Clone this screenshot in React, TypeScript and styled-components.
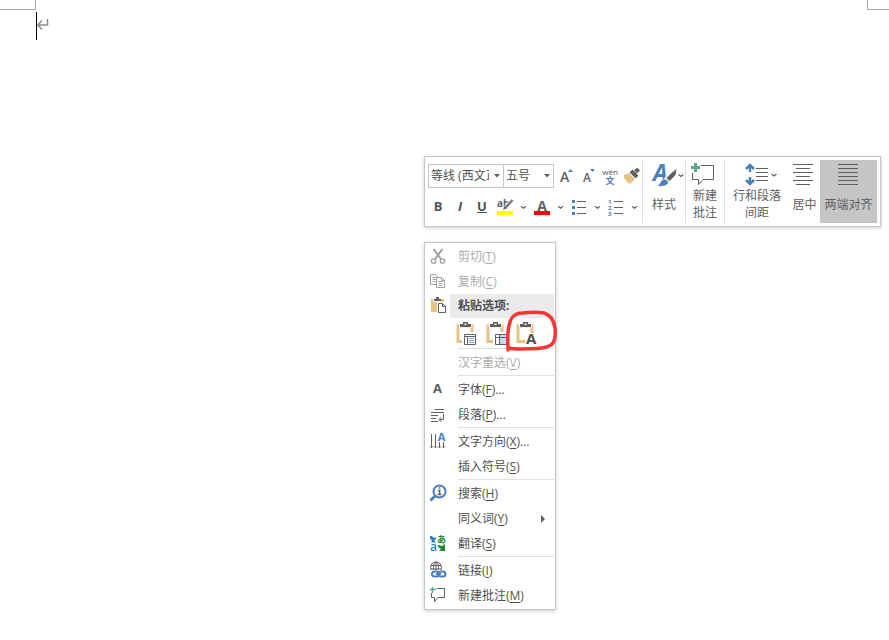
import React from "react";
import styled, { createGlobalStyle, css } from "styled-components";

const color = {
  ink: "#505050",
  line: "#5f5f5f",
  faded: "#ababab",
  border: "#c6c6c6",
  rule: "#dcdfe4",
  blue: "#4a7fbb",
  green: "#5fa58c",
  tan: "#e8c283",
};

const GlobalStyle = createGlobalStyle`
  *, *::before, *::after { box-sizing: border-box; }
  body {
    margin: 0;
    background: #fff;
    color: ${color.ink};
    font-family: "Open Sans", "Noto Sans CJK SC", sans-serif;
    font-size: 12px;
  }
  svg { display: block; flex: none; overflow: visible; }
  svg text { font-family: "Open Sans", "Noto Sans CJK SC", sans-serif; }
`;

const resetButton = css`
  appearance: none;
  margin: 0;
  padding: 0;
  border: 0;
  background: transparent;
  color: inherit;
  font: inherit;
  cursor: default;
`;

/* ---------- document ---------- */

const Page = styled.main`
  position: relative;
  min-height: 100vh;
  overflow: hidden;
`;

const MarginMarks = styled.div`
  display: flex;
  justify-content: space-between;
`;

const Corner = styled.span<{ $side: "left" | "right" }>`
  width: ${(p) => (p.$side === "left" ? 36 : 22)}px;
  height: 10px;
  border-bottom: 1px solid #aaa;
  ${(p) => (p.$side === "left" ? "border-right" : "border-left")}: 1px solid #aaa;
`;

const Paragraph = styled.div`
  display: flex;
  margin-top: 2px;
  padding-left: 36px;
`;

const Caret = styled.span`
  width: 1px;
  height: 28px;
  background: #000;
`;

const Popups = styled.div`
  position: absolute;
  top: 156px;
  left: 424px;
  display: flex;
  flex-direction: column;
  align-items: flex-start;
  gap: 15px;
`;

const panel = css`
  border: 1px solid ${color.border};
  background: #fff;
  box-shadow: 0 1px 4px rgba(0, 0, 0, 0.2);
`;

/* ---------- mini toolbar ---------- */

const Toolbar = styled.div`
  ${panel}
  display: flex;
  padding: 3px;
`;

const FontGroup = styled.div`
  display: flex;
  flex-direction: column;
  gap: 8px;
  padding: 4px 0;
`;

const ToolRow = styled.div`
  display: flex;
  align-items: center;
`;

const Combo = styled.span<{ $width: number }>`
  position: relative;
  width: ${(p) => p.$width}px;
  height: 24px;
  & + & { margin-left: -1px; }
  svg { position: absolute; top: 10px; right: 4px; pointer-events: none; }
`;

const ComboSelect = styled.select`
  appearance: none;
  width: 100%;
  height: 100%;
  padding: 0 14px 2px 2px;
  border: 1px solid ${color.border};
  border-radius: 0;
  background: #fff;
  color: ${color.ink};
  font: inherit;
`;

const IconButtons = styled.div`
  display: flex;
`;

const IconButton = styled.button`
  ${resetButton}
  width: 22px;
  height: 22px;
`;

const LetterButton = styled(IconButton)`
  padding-right: 2px;
  padding-bottom: 2px;
  font-size: 13px;
  line-height: 20px;
  font-weight: 700;
`;

const ArrowButton = styled.button`
  ${resetButton}
  display: flex;
  align-items: center;
  justify-content: center;
  width: 15px;
  height: 22px;
`;

const Divider = styled.span`
  width: 1px;
  background: ${color.rule};
`;

const LargeButton = styled.button<{ $width: number; $active?: boolean }>`
  ${resetButton}
  display: flex;
  flex-direction: column;
  align-items: center;
  width: ${(p) => p.$width}px;
  height: 63px;
  background: ${(p) => (p.$active ? "#c5c5c5" : "transparent")};
`;

const LargeLabel = styled.span`
  display: flex;
  align-items: center;
  height: 34px;
  color: #606060;
  line-height: 17px;
  text-align: center;
  white-space: pre;
`;

/* ---------- context menu ---------- */

const Menu = styled.div`
  ${panel}
  min-width: 132px;
  padding: 1px;
`;

const MenuItem = styled.button`
  ${resetButton}
  display: flex;
  align-items: center;
  width: 100%;
  height: 25px;
  text-align: left;
  white-space: nowrap;
  &:disabled { color: ${color.faded}; }
  u { text-underline-offset: 2px; text-decoration-thickness: 1px; }
`;

const IconSlot = styled.span`
  flex: none;
  width: 24px;
`;

const ItemText = styled.span`
  flex: 1;
  padding: 0 0 2px 8px;
`;

const MenuHeading = styled.div`
  display: flex;
  height: 24px;
`;

const HeadingText = styled.strong`
  flex: 1;
  padding-left: 8px;
  background: #ebebeb;
  line-height: 24px;
`;

const Separator = styled.div`
  height: 1px;
  margin: 0 0 1px 32px;
  background: ${color.rule};
`;

const PasteOptions = styled.div`
  position: relative;
  display: flex;
  padding-left: 25px;
`;

const PasteButton = styled.button`
  ${resetButton}
  display: flex;
  align-items: center;
  justify-content: center;
  width: 30px;
  height: 30px;
`;

const RedMark = styled.svg`
  position: absolute;
  top: -10px;
  left: 78px;
  pointer-events: none;
`;

/* ---------- drawings ---------- */

const chevronPath = "l2.500 2 2.500-2";

const Chevron = () => (
  <svg width="7" height="5" viewBox="0 0 7 5">
    <path d={`M1 1.200${chevronPath}`} fill="none" stroke={color.line} strokeWidth="1.200" />
  </svg>
);

const Triangle = () => (
  <svg width="6" height="4" viewBox="0 0 6 4">
    <path d="M0 0h6L3 3.500Z" fill={color.line} />
  </svg>
);

type Art = { children: React.ReactNode };

const Small = ({ children }: Art) => (
  <svg width="22" height="22" viewBox="0 0 22 22" fill="none">{children}</svg>
);

const Large = ({ width, children }: Art & { width: number }) => (
  <svg width={width} height="27" viewBox={`0 0 ${width} 27`} fill="none">{children}</svg>
);

const Slot = ({ children }: Art) => (
  <svg width="24" height="25" viewBox="0 0 24 25" fill="none">{children}</svg>
);

const GrowFont = () => (
  <Small>
    <text x="6" y="17" fontSize="14" fontWeight="600" fill={color.line}>A</text>
    <path d="M14 7h5l-2.500-3Z" fill={color.blue} />
  </Small>
);

const ShrinkFont = () => (
  <Small>
    <text x="7" y="17" fontSize="12" fontWeight="600" fill={color.line}>A</text>
    <path d="M14 4h5l-2.500 3Z" fill={color.blue} />
  </Small>
);

const Phonetic = () => (
  <Small>
    <text x="12" y="10" fontSize="8" textAnchor="middle" fill={color.ink}>wén</text>
    <text x="12" y="19" fontSize="9" fontWeight="700" textAnchor="middle" fill={color.blue}>文</text>
  </Small>
);

const Painter = () => (
  <Small>
    <path d="m4 10 5-2 6 6-5 5-3-2-3-4Z" fill={color.tan} />
    <path d="m9.500 7.500 3-3 6 6-3 3Z" fill={color.line} />
    <path d="m14.500 8 4-4" stroke={color.line} strokeWidth="4" />
    <path d="m10 8.500 5.500 5.500M13.500 5l5 5" stroke="#fff" strokeWidth=".7" />
  </Small>
);

const Highlighter = () => (
  <Small>
    <text x="3" y="11" fontSize="10" fontWeight="700" fill={color.line}>ab</text>
    <path d="m18.500 4-8 9" stroke="#fff" strokeWidth="4.500" />
    <path d="m18.500 4-7 7.500" stroke="#777" strokeWidth="2.500" />
    <path d="m9 14 1.500-4 2.500 2.300Z" fill={color.line} />
    <path d="M3 15h16v4H3Z" fill="#ff0" />
  </Small>
);

const FontColor = () => (
  <Small>
    <text x="11" y="15" fontSize="14" fontWeight="700" textAnchor="middle" fill={color.line}>A</text>
    <path d="M3 15h16v4H3Z" fill="#f00" />
  </Small>
);

const ListLines = () => (
  <path d="M9 5.500h9M9 11.500h9M9 17.500h9" stroke={color.line} />
);

const Bullets = () => (
  <Small>
    <ListLines />
    <path d="M4 4h3v3H4ZM4 10h3v3H4ZM4 16h3v3H4Z" fill={color.blue} />
  </Small>
);

const Numbering = () => (
  <Small>
    <ListLines />
    <g fontSize="6" fontWeight="700" fill={color.blue}>
      <text x="3" y="8">1</text>
      <text x="3" y="14">2</text>
      <text x="3" y="20">3</text>
    </g>
  </Small>
);

const Styles = () => (
  <Large width={42}>
    <text x="10" y="21" fontSize="23" fontWeight="700" fontStyle="italic" fill={color.blue}>A</text>
    <path d="M34 8 23 21" stroke="#fff" strokeWidth="6" />
    <path d="m33.500 9-1 6-6 6-3-3 5-5Z" fill={color.line} />
    <path d="M14 26c3-1 3-5 6-6.500 3-1 6 1 5 4-2 3-7 3-11 2.500Z" fill={color.blue} stroke="#fff" strokeWidth=".5" />
    <path d={`M35.500 14.500${chevronPath}`} stroke={color.line} strokeWidth="1.200" />
  </Large>
);

const NewComment = () => (
  <Large width={38}>
    <path d="M15 5.500h12.500v14H17l-4.500 5v-5h-6V13" stroke={color.line} />
    <path d="M8 3h3v3h3v3h-3v3H8V9H5V6h3Z" fill={color.green} />
  </Large>
);

const LineSpacing = () => (
  <Large width={64}>
    <path d="M25 6v6M25 17v6" stroke={color.blue} strokeWidth="2.500" />
    <path d="m21 9 4-4 4 4M21 20l4 4 4-4" stroke={color.blue} strokeWidth="2.500" />
    <path d="M31 8.500h12M31 12.500h12M31 16.500h12M31 20.500h12" stroke={color.line} />
    <path d={`M46.500 14${chevronPath}`} stroke={color.line} strokeWidth="1.200" />
  </Large>
);

const CenterLines = () => (
  <Large width={31}>
    <path d="M4 4.500h20M7 8.500h14M4 12.500h20M7 16.500h14M4 20.500h20M7 24.500h14" stroke={color.line} />
  </Large>
);

const JustifyLines = () => (
  <Large width={57}>
    <path d="M18 4.500h20M18 8.500h20M18 12.500h20M18 16.500h20M18 20.500h20M18 24.500h20" stroke={color.line} />
  </Large>
);

const Cut = () => (
  <Slot>
    <path d="m7.500 5 7.500 10M16.500 5 9 15" stroke="#a0a0a0" strokeWidth="2" />
    <circle cx="7.500" cy="17" r="2.200" stroke="#a0a0a0" strokeWidth="1.300" />
    <circle cx="16.500" cy="17" r="2.200" stroke="#a0a0a0" strokeWidth="1.300" />
  </Slot>
);

const Copy = () => (
  <Slot>
    <path d="M10 15.500H4.500v-10h5l3 3M6.500 8.500h3M6.500 10.500h3M6.500 12.500h3" stroke="#a0a0a0" />
    <path d="M10.500 8.500h5l3 3v7h-8ZM12.500 12.500h4M12.500 14.500h4M12.500 16.500h4M15.500 8.500v3h3" fill="#fff" stroke="#a0a0a0" />
  </Slot>
);

const Paste = () => (
  <Slot>
    <path d="M5 5h13v13H5Z" fill={color.tan} />
    <path d="M7.500 4.500h7v3h-7Z" fill={color.line} stroke="#fff" />
    <path d="M8 5h2V3h3v2h2v2H8Z" fill={color.line} />
    <path d="M11 8h10v12H11Z" fill="#fff" />
    <path d="M12.500 9.500h4l3 3v6h-7ZM16.500 9.500v3h3" fill="#fff" stroke={color.line} />
  </Slot>
);

const FontLetter = () => (
  <Slot>
    <text x="11.500" y="16" fontSize="13" fontWeight="700" textAnchor="middle" fill={color.line}>A</text>
  </Slot>
);

const ParagraphLines = () => (
  <Slot>
    <path d="M9 7.500h9M5 10.500h13M5 13.500h7M5 16.500h5M5 19.500h7" stroke={color.line} />
    <path d="M17.500 12v5.500h-4M15.500 15l-2.500 2.500 2.500 2.500" stroke={color.line} />
  </Slot>
);

const TextDirection = () => (
  <Slot>
    <path d="M5.500 5v14M9.500 5v14M13.500 13v6M17.500 13v6" stroke={color.line} />
    <path d="m3.500 17 2 2 2-2M7.500 17l2 2 2-2M11.500 17l2 2 2-2M15.500 17l2 2 2-2" stroke={color.line} strokeWidth=".6" />
    <text x="15.500" y="12" fontSize="11" fontWeight="700" textAnchor="middle" fill={color.blue}>A</text>
  </Slot>
);

const Search = () => (
  <Slot>
    <path d="m4.500 19.500 5-5" stroke={color.blue} strokeWidth="2.800" />
    <circle cx="13.500" cy="10.500" r="6" stroke={color.blue} strokeWidth="2" />
    <path d="M12 9.500h1.700v4M11.500 13.500h4M12.500 7h2" stroke={color.line} strokeWidth="1.500" />
  </Slot>
);

const Translate = () => (
  <Slot>
    <text x="11" y="12" fontSize="9" fontWeight="700" fill="#158a2c">あ</text>
    <text x="4" y="20" fontSize="12" fontWeight="600" fill="#1c7fd0">a</text>
    <path d="M4 5h2l1 1.500h3v2H8l2 3H5l1-2-2-2Z" fill="#1c7fd0" />
    <path d="M19 13v7h-6l2-2-3-2v-2l4 1Z" fill="#158a2c" />
  </Slot>
);

const Link = () => (
  <Slot>
    <circle cx="10" cy="9.500" r="5.500" stroke={color.line} />
    <ellipse cx="10" cy="9.500" rx="2.500" ry="5.500" stroke={color.line} />
    <path d="M10 4v11M5 7.500h10M4.500 11h11" stroke={color.line} />
    <path d="M4 12h17v8H4Z" fill="#fff" />
    <rect x="6" y="13.500" width="7" height="5" rx="2.500" stroke={color.blue} strokeWidth="2" />
    <rect x="12.500" y="13.500" width="7" height="5" rx="2.500" stroke={color.blue} strokeWidth="2" />
    <path d="M10 16h5" stroke={color.blue} strokeWidth="2" />
  </Slot>
);

const CommentSmall = () => (
  <Slot>
    <path d="M11 5.500h7.500v9H12l-3.500 4v-4h-3V10" stroke={color.line} />
    <path d="M6.500 4v6M4 6.500h6" stroke={color.green} strokeWidth="1.500" />
  </Slot>
);

const Clipboard = ({ children }: Art) => (
  <svg width="20" height="24" viewBox="0 0 20 24" fill="none">
    <path d="M2 5h14v15.500H2Z" stroke={color.tan} strokeWidth="3" />
    <path d="M3 2.500h13v4H3Z" fill="#fff" />
    <path d="M4 6V3h3V1h5v2h3v3Z" fill={color.line} />
    <path d="M8.500 2.500h2v1.500h-2Z" fill="#fff" />
    {children}
  </svg>
);

const KeepSource = () => (
  <Clipboard>
    <path d="M6 11h14v13H6Z" fill="#fff" />
    <path d="M8.500 13.500h11v10h-11ZM8.500 15.500h11M11.500 16v7" stroke={color.line} />
    <path d="M13 17.500h5M13 19.500h5M13 21.500h5" stroke="#7fa3cf" />
  </Clipboard>
);

const MergeFormat = () => (
  <Clipboard>
    <path d="M7 11h13v13H7Z" fill="#fff" />
    <path d="M9.500 13.500h12v10h-12Z" fill="#c6dbef" stroke={color.line} />
    <path d="M10 14h3v9h-3Z" fill="#fff" />
    <path d="M13.500 14v9M10 16.500h11" stroke={color.line} />
  </Clipboard>
);

const TextOnly = () => (
  <Clipboard>
    <path d="M9 12h11v12H9Z" fill="#fff" />
    <text x="10" y="23" fontSize="15" fontWeight="700" fill={color.ink}>A</text>
  </Clipboard>
);

/* ---------- composition ---------- */

type ItemProps = {
  label: string;
  hotkey: string;
  tail?: string;
  icon?: React.ReactNode;
  disabled?: boolean;
  submenu?: boolean;
};

const Item = ({ label, hotkey, tail = "", icon, disabled, submenu }: ItemProps) => (
  <MenuItem role="menuitem" disabled={disabled}>
    <IconSlot>{icon}</IconSlot>
    <ItemText>
      {label}(<u>{hotkey}</u>){tail}
    </ItemText>
    {submenu && (
      <svg width="14" height="8" viewBox="0 0 14 8">
        <path d="M1 0v8l4-4Z" fill={color.line} />
      </svg>
    )}
  </MenuItem>
);

const Split = ({ label, children }: Art & { label: string }) => (
  <>
    <IconButton aria-label={label}>{children}</IconButton>
    <ArrowButton aria-label={`${label}选项`}><Chevron /></ArrowButton>
  </>
);

export default function App() {
  return (
    <>
      <GlobalStyle />
      <Page>
        <MarginMarks>
          <Corner $side="left" />
          <Corner $side="right" />
        </MarginMarks>
        <Paragraph>
          <Caret />
          <svg width="12" height="22" viewBox="0 0 12 22" fill="none">
            <path d="M10.500 7v6H1M5 8.500.800 13 5 17.500" stroke="#8c8c8c" strokeWidth="1.500" />
          </svg>
        </Paragraph>

        <Popups>
          <Toolbar role="toolbar">
            <FontGroup>
              <ToolRow>
                <Combo $width={76}>
                  <ComboSelect aria-label="字体">
                    <option>等线 (西文正文)</option>
                  </ComboSelect>
                  <Triangle />
                </Combo>
                <Combo $width={51}>
                  <ComboSelect aria-label="字号">
                    <option>五号</option>
                  </ComboSelect>
                  <Triangle />
                </Combo>
                <IconButtons>
                  <IconButton aria-label="增大字号"><GrowFont /></IconButton>
                  <IconButton aria-label="减小字号"><ShrinkFont /></IconButton>
                  <IconButton aria-label="拼音指南"><Phonetic /></IconButton>
                  <IconButton aria-label="格式刷"><Painter /></IconButton>
                </IconButtons>
              </ToolRow>
              <ToolRow>
                <LetterButton aria-label="加粗">B</LetterButton>
                <LetterButton aria-label="倾斜"><em>I</em></LetterButton>
                <LetterButton aria-label="下划线"><u>U</u></LetterButton>
                <Split label="突出显示"><Highlighter /></Split>
                <Split label="字体颜色"><FontColor /></Split>
                <Split label="项目符号"><Bullets /></Split>
                <Split label="编号"><Numbering /></Split>
              </ToolRow>
            </FontGroup>
            <Divider />
            <LargeButton $width={42}>
              <Styles />
              <LargeLabel>样式</LargeLabel>
            </LargeButton>
            <Divider />
            <LargeButton $width={38}>
              <NewComment />
              <LargeLabel>{"新建\n批注"}</LargeLabel>
            </LargeButton>
            <Divider />
            <LargeButton $width={64}>
              <LineSpacing />
              <LargeLabel>{"行和段落\n间距"}</LargeLabel>
            </LargeButton>
            <LargeButton $width={31}>
              <CenterLines />
              <LargeLabel>居中</LargeLabel>
            </LargeButton>
            <LargeButton $width={57} $active aria-pressed="true">
              <JustifyLines />
              <LargeLabel>两端对齐</LargeLabel>
            </LargeButton>
          </Toolbar>

          <Menu role="menu">
            <Item label="剪切" hotkey="T" icon={<Cut />} disabled />
            <Item label="复制" hotkey="C" icon={<Copy />} disabled />
            <MenuHeading>
              <IconSlot><Paste /></IconSlot>
              <HeadingText>粘贴选项:</HeadingText>
            </MenuHeading>
            <PasteOptions>
              <PasteButton aria-label="保留源格式"><KeepSource /></PasteButton>
              <PasteButton aria-label="合并格式"><MergeFormat /></PasteButton>
              <PasteButton aria-label="只保留文本"><TextOnly /></PasteButton>
              <RedMark width="56" height="46" viewBox="0 0 56 46" fill="none">
                <path
                  d="M4 42C4 34 3 26 5 18 6 10 11 5 18 5c8-1 16-1 22 0 7 2 10 8 11 15 1 9-1 16-6 18-7 4-18 2-28 3-5 0-9 0-12-1"
                  stroke="#f93434"
                  strokeWidth="3.500"
                  strokeLinecap="round"
                  strokeLinejoin="round"
                />
              </RedMark>
            </PasteOptions>
            <Separator />
            <Item label="汉字重选" hotkey="V" disabled />
            <Separator />
            <Item label="字体" hotkey="F" tail="..." icon={<FontLetter />} />
            <Item label="段落" hotkey="P" tail="..." icon={<ParagraphLines />} />
            <Separator />
            <Item label="文字方向" hotkey="X" tail="..." icon={<TextDirection />} />
            <Item label="插入符号" hotkey="S" />
            <Separator />
            <Item label="搜索" hotkey="H" icon={<Search />} />
            <Item label="同义词" hotkey="Y" submenu />
            <Item label="翻译" hotkey="S" icon={<Translate />} />
            <Separator />
            <Item label="链接" hotkey="I" icon={<Link />} />
            <Item label="新建批注" hotkey="M" icon={<CommentSmall />} />
          </Menu>
        </Popups>
      </Page>
    </>
  );
}
